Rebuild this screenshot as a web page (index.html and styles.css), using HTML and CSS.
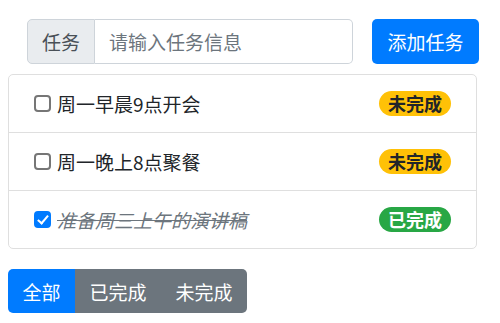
FILE: index.html
```html
<!DOCTYPE html>
<html lang="zh-CN">
<head>
    <meta charset="UTF-8">
    <meta name="viewport" content="width=device-width, initial-scale=1.0">
    <title>任务列表</title>
    <link rel="stylesheet" href="styles.css">
</head>
<body>
    <!-- Add Task Form -->
    <form class="task-form">
        <div class="input-group">
            <span class="input-addon">任务</span>
            <input type="text" class="task-input" placeholder="请输入任务信息">
        </div>
        <button type="button" class="btn btn-primary add-btn">添加任务</button>
    </form>

    <!-- Task List -->
    <ul class="task-list">
        <li class="task-item">
            <label class="task-label">
                <input type="checkbox" class="task-check">
                <span class="task-text">周一早晨9点开会</span>
            </label>
            <span class="badge badge-warning">未完成</span>
        </li>
        <li class="task-item">
            <label class="task-label">
                <input type="checkbox" class="task-check">
                <span class="task-text">周一晚上8点聚餐</span>
            </label>
            <span class="badge badge-warning">未完成</span>
        </li>
        <li class="task-item">
            <label class="task-label">
                <input type="checkbox" class="task-check" checked>
                <span class="task-text done">准备周三上午的演讲稿</span>
            </label>
            <span class="badge badge-success">已完成</span>
        </li>
    </ul>

    <!-- Filter -->
    <div class="btn-group">
        <button type="button" class="btn btn-primary">全部</button>
        <button type="button" class="btn btn-secondary">已完成</button>
        <button type="button" class="btn btn-secondary">未完成</button>
    </div>
</body>
</html>
```

FILE: styles.css
```css
body {
    margin: 8px;
    font-family: "Noto Sans CJK SC", "Liberation Sans", sans-serif;
    font-size: 19px;
    color: #212529;
    background-color: #fff;
}

.task-form {
    display: flex;
    align-items: center;
    padding: 11px 13px 0 19px;
    margin: 0 0 10px 0;
}

.input-group {
    display: flex;
    width: 326px;
    height: 45px;
}

.input-addon {
    display: flex;
    align-items: center;
    box-sizing: border-box;
    padding: 0 14px;
    background-color: #e9ecef;
    border: 1px solid #ced4da;
    border-radius: 5px 0 0 5px;
    color: #495057;
}

.task-input {
    flex: 1;
    min-width: 0;
    box-sizing: border-box;
    padding: 0 14px;
    border: 1px solid #ced4da;
    border-left: none;
    border-radius: 0 5px 5px 0;
    font-family: inherit;
    font-size: 19px;
    color: #495057;
    outline: none;
}

.task-input::placeholder {
    color: #6c757d;
}

.btn {
    box-sizing: border-box;
    height: 45px;
    padding: 0 14px;
    border: none;
    font-family: inherit;
    font-size: 19px;
    color: #fff;
    cursor: pointer;
}

.btn-primary {
    background-color: #007bff;
}

.btn-secondary {
    background-color: #6c757d;
}

.add-btn {
    margin-left: auto;
    width: 107px;
    border-radius: 5px;
}

.task-list {
    list-style: none;
    margin: 0;
    padding: 0;
    width: 467px;
    border: 1px solid #dfdfdf;
    border-radius: 5px;
}

.task-item {
    display: flex;
    align-items: center;
    justify-content: space-between;
    height: 57px;
    padding: 0 25px 0 24px;
    border-top: 1px solid #dfdfdf;
}

.task-item:first-child {
    border-top: none;
}

.task-label {
    display: flex;
    align-items: center;
}

.task-check {
    appearance: none;
    position: relative;
    box-sizing: border-box;
    width: 17px;
    height: 17px;
    margin: 0 6px 0 1px;
    border: 2px solid #767676;
    border-radius: 4px;
    background-color: #fff;
}

.task-check:checked {
    border-color: #007bff;
    background-color: #007bff;
}

.task-check:checked::after {
    content: "";
    position: absolute;
    left: 4px;
    top: 0px;
    width: 4px;
    height: 9px;
    border: solid #fff;
    border-width: 0 2.5px 2.5px 0;
    transform: rotate(40deg);
}

.task-text.done {
    font-style: italic;
    text-decoration: line-through;
    color: #6c757d;
}

.badge {
    display: inline-block;
    padding: 3px 9px;
    border-radius: 13px;
    font-size: 18px;
    font-weight: bold;
    line-height: 19px;
}

.badge-warning {
    background-color: #ffc107;
    color: #212529;
}

.badge-success {
    background-color: #28a745;
    color: #fff;
}

.btn-group {
    display: inline-flex;
    margin-top: 20px;
    border-radius: 5px;
    overflow: hidden;
}

.btn-group .btn {
    height: 44px;
    padding: 0 14.5px;
}
```
